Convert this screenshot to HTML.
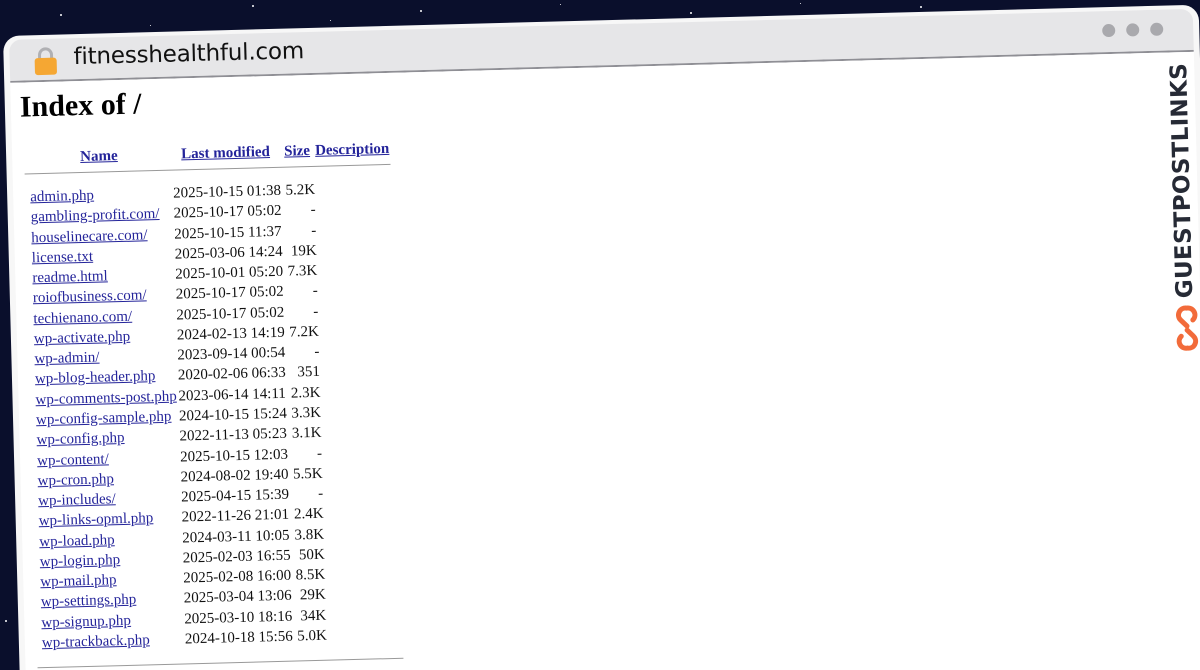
<!DOCTYPE html>
<html><head><meta charset="utf-8"><style>
html,body{margin:0;padding:0;width:1200px;height:670px;overflow:hidden;background:#0a0f2c;}
#root{position:relative;width:1200px;height:670px;overflow:hidden;background:#0a0f2c;}
.star{position:absolute;background:#fff;border-radius:50%;}
#win{position:absolute;left:3px;top:36px;width:1196px;height:690px;background:#f7f7f7;border-radius:16px;transform-origin:0 0;transform:rotate(-1.5deg);}
#bar{position:absolute;left:6px;top:4px;right:6px;height:41px;background:#e6e6e8;border-radius:12px 12px 0 0;border-bottom:2px solid #8f8f95;}
#page{position:absolute;left:6px;top:47px;right:6px;bottom:0;background:#fff;}
.dot{position:absolute;top:13px;width:13px;height:13px;border-radius:50%;background:#a9a9ad;}
#url{position:absolute;left:64px;top:6px;font:500 23px "DejaVu Sans","Liberation Sans",sans-serif;color:#111;letter-spacing:-0.2px;}
.t{position:absolute;font:15px "Liberation Serif",serif;color:#111;white-space:nowrap;line-height:18px;}
a{color:#24249a;text-decoration:underline;}
.h{font-weight:bold;}
.sz{text-align:right;width:40px;}
h1{position:absolute;left:9px;top:8px;margin:0;font:bold 30px "Liberation Serif",serif;color:#000;}
hr{position:absolute;margin:0;border:0;border-top:1px solid #999;height:0;}
#logo{position:absolute;left:1157px;top:246px;transform-origin:0 0;transform:rotate(-90deg);font:bold 23px "DejaVu Sans","Liberation Sans",sans-serif;color:#262a35;letter-spacing:0.3px;white-space:nowrap;line-height:24px;}
</style></head><body><div id="root">
<div class="star" style="left:60px;top:14px;width:2px;height:2px"></div>
<div class="star" style="left:150px;top:25px;width:1px;height:1px"></div>
<div class="star" style="left:252px;top:5px;width:2px;height:2px"></div>
<div class="star" style="left:330px;top:20px;width:1px;height:1px"></div>
<div class="star" style="left:420px;top:10px;width:2px;height:2px"></div>
<div class="star" style="left:560px;top:4px;width:1px;height:1px"></div>
<div class="star" style="left:690px;top:12px;width:2px;height:2px"></div>
<div class="star" style="left:800px;top:3px;width:1px;height:1px"></div>
<div class="star" style="left:920px;top:6px;width:2px;height:2px"></div>
<div class="star" style="left:5px;top:620px;width:2px;height:2px"></div>
<div class="star" style="left:12px;top:338px;width:2px;height:2px"></div>
<div id="win">
 <div id="bar">
  <svg style="position:absolute;left:24px;top:7px" width="24" height="30" viewBox="0 0 24 30"><path d="M6 13V9a6 6 0 0 1 12 0v4" fill="none" stroke="#b0b0b3" stroke-width="3"/><rect x="1" y="12" width="22" height="17" rx="3" fill="#f5a733"/></svg>
  <div id="url">fitnesshealthful.com</div>
  <div class="dot" style="left:1093px"></div>
  <div class="dot" style="left:1117px"></div>
  <div class="dot" style="left:1141px"></div>
 </div>
 <div id="page">
  <h1>Index of /</h1>
  <div class="t h" style="left:68px;top:67px"><a>Name</a></div>
  <div class="t h" style="left:169px;top:67px"><a>Last modified</a></div>
  <div class="t h" style="left:272px;top:67px"><a>Size</a></div>
  <div class="t h" style="left:303px;top:67px"><a>Description</a></div>
  <hr style="left:12px;top:91px;width:366px">
  <div id="rows"></div>
  <hr style="left:12px;top:585px;width:366px">
  <div id="logo">GUESTPOSTLINKS</div>
  <svg style="position:absolute;left:1157px;top:252px" width="26" height="48" viewBox="0 0 26 48"><path d="M13 22 L7 16 A7 7 0 0 1 13 4 A7 7 0 0 1 19 16 M13 26 L19 32 A7 7 0 0 1 13 44 A7 7 0 0 1 7 32" fill="none" stroke="#f26b3a" stroke-width="5" stroke-linecap="round"/></svg>
 </div>
</div>
<script>
var d=[["admin.php","2025-10-15 01:38","5.2K"],["gambling-profit.com/","2025-10-17 05:02","-"],["houselinecare.com/","2025-10-15 11:37","-"],["license.txt","2025-03-06 14:24","19K"],["readme.html","2025-10-01 05:20","7.3K"],["roiofbusiness.com/","2025-10-17 05:02","-"],["techienano.com/","2025-10-17 05:02","-"],["wp-activate.php","2024-02-13 14:19","7.2K"],["wp-admin/","2023-09-14 00:54","-"],["wp-blog-header.php","2020-02-06 06:33","351"],["wp-comments-post.php","2023-06-14 14:11","2.3K"],["wp-config-sample.php","2024-10-15 15:24","3.3K"],["wp-config.php","2022-11-13 05:23","3.1K"],["wp-content/","2025-10-15 12:03","-"],["wp-cron.php","2024-08-02 19:40","5.5K"],["wp-includes/","2025-04-15 15:39","-"],["wp-links-opml.php","2022-11-26 21:01","2.4K"],["wp-load.php","2024-03-11 10:05","3.8K"],["wp-login.php","2025-02-03 16:55","50K"],["wp-mail.php","2025-02-08 16:00","8.5K"],["wp-settings.php","2025-03-04 13:06","29K"],["wp-signup.php","2025-03-10 18:16","34K"],["wp-trackback.php","2024-10-18 15:56","5.0K"]];
var h="";for(var i=0;i<d.length;i++){var y=106+i*20.27;h+='<div class="t" style="left:17px;top:'+y+'px"><a>'+d[i][0]+'</a></div><div class="t" style="left:160px;top:'+y+'px">'+d[i][1]+'</div><div class="t sz" style="left:262px;top:'+y+'px">'+d[i][2]+'</div>';}
document.getElementById("rows").innerHTML=h;
</script>
</div></body></html>
